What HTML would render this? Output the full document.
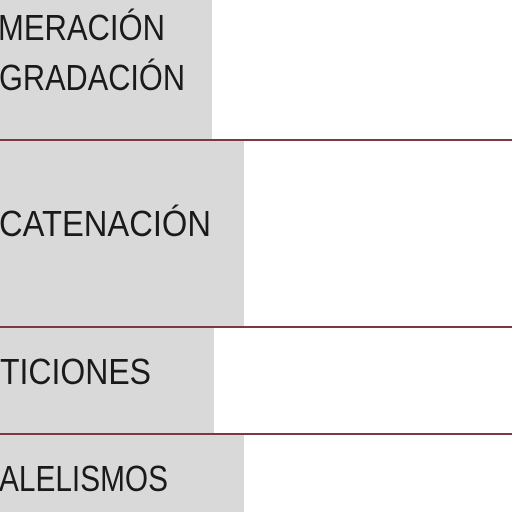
<!DOCTYPE html>
<html><head><style>html,body{margin:0;padding:0;background:#fff;width:512px;height:512px;overflow:hidden}</style></head>
<body>
<svg width="512" height="512" xmlns="http://www.w3.org/2000/svg">
<rect x="0" y="0" width="212" height="139" fill="#d9d9d9"/>
<rect x="0" y="141" width="244" height="186" fill="#d9d9d9"/>
<rect x="0" y="328" width="214" height="106" fill="#d9d9d9"/>
<rect x="0" y="435" width="244" height="77" fill="#d9d9d9"/>
<rect x="0" y="139" width="512" height="2" fill="#7a3a44"/>
<rect x="0" y="326" width="512" height="2" fill="#7a3a44"/>
<rect x="0" y="433" width="512" height="2" fill="#7a3a44"/>
<g font-family="Liberation Sans, sans-serif" font-size="36" fill="#1a1a1a">
<text x="-2" y="40" textLength="167" lengthAdjust="spacingAndGlyphs">MERACIÓN</text>
<text x="-1" y="90" textLength="186" lengthAdjust="spacingAndGlyphs">GRADACIÓN</text>
<text x="-1" y="236" textLength="212" lengthAdjust="spacingAndGlyphs">CATENACIÓN</text>
<text x="0" y="384" textLength="151" lengthAdjust="spacingAndGlyphs">TICIONES</text>
<text x="-1" y="491" textLength="169" lengthAdjust="spacingAndGlyphs">ALELISMOS</text>
</g>
</svg>
</body></html>
